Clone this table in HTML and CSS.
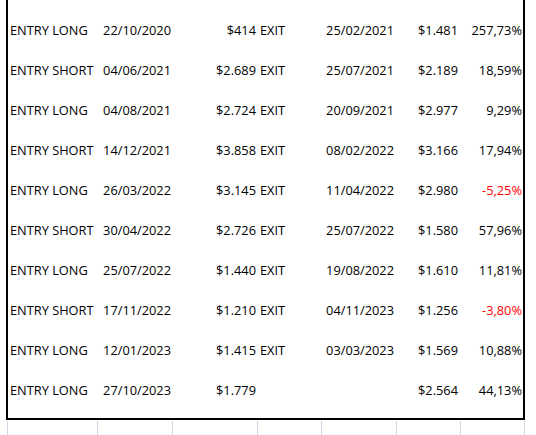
FILE: index.html
```html
<!DOCTYPE html>
<html lang="en">
<head>
<meta charset="utf-8">
<title>Trades</title>
<link rel="stylesheet" href="styles.css">
</head>
<body>
<div class="sheet">
  <div class="row"><span class="c1">ENTRY LONG</span><span class="c2">22/10/2020</span><span class="c3">$414</span><span class="c4">EXIT</span><span class="c5">25/02/2021</span><span class="c6">$1.481</span><span class="c7">257,73%</span></div>
  <div class="row"><span class="c1">ENTRY SHORT</span><span class="c2">04/06/2021</span><span class="c3">$2.689</span><span class="c4">EXIT</span><span class="c5">25/07/2021</span><span class="c6">$2.189</span><span class="c7">18,59%</span></div>
  <div class="row"><span class="c1">ENTRY LONG</span><span class="c2">04/08/2021</span><span class="c3">$2.724</span><span class="c4">EXIT</span><span class="c5">20/09/2021</span><span class="c6">$2.977</span><span class="c7">9,29%</span></div>
  <div class="row"><span class="c1">ENTRY SHORT</span><span class="c2">14/12/2021</span><span class="c3">$3.858</span><span class="c4">EXIT</span><span class="c5">08/02/2022</span><span class="c6">$3.166</span><span class="c7">17,94%</span></div>
  <div class="row"><span class="c1">ENTRY LONG</span><span class="c2">26/03/2022</span><span class="c3">$3.145</span><span class="c4">EXIT</span><span class="c5">11/04/2022</span><span class="c6">$2.980</span><span class="c7 neg">-5,25%</span></div>
  <div class="row"><span class="c1">ENTRY SHORT</span><span class="c2">30/04/2022</span><span class="c3">$2.726</span><span class="c4">EXIT</span><span class="c5">25/07/2022</span><span class="c6">$1.580</span><span class="c7">57,96%</span></div>
  <div class="row"><span class="c1">ENTRY LONG</span><span class="c2">25/07/2022</span><span class="c3">$1.440</span><span class="c4">EXIT</span><span class="c5">19/08/2022</span><span class="c6">$1.610</span><span class="c7">11,81%</span></div>
  <div class="row"><span class="c1">ENTRY SHORT</span><span class="c2">17/11/2022</span><span class="c3">$1.210</span><span class="c4">EXIT</span><span class="c5">04/11/2023</span><span class="c6">$1.256</span><span class="c7 neg">-3,80%</span></div>
  <div class="row"><span class="c1">ENTRY LONG</span><span class="c2">12/01/2023</span><span class="c3">$1.415</span><span class="c4">EXIT</span><span class="c5">03/03/2023</span><span class="c6">$1.569</span><span class="c7">10,88%</span></div>
  <div class="row"><span class="c1">ENTRY LONG</span><span class="c2">27/10/2023</span><span class="c3">$1.779</span><span class="c4"></span><span class="c5"></span><span class="c6">$2.564</span><span class="c7">44,13%</span></div>
</div>
<div class="gridlines">
  <span></span><span></span><span></span><span></span><span></span><span></span><span></span>
</div>
</body>
</html>
```
FILE: styles.css
```css
html, body {
  margin: 0;
  padding: 0;
  background: #ffffff;
}

body {
  font-family: "Open Sans", "Noto Sans", "Liberation Sans", sans-serif;
  font-size: 12.8px;
  color: #000000;
  width: 536px;
  height: 435px;
  overflow: hidden;
}

.sheet {
  margin-left: 6px;
  width: 519px;
  box-sizing: border-box;
  border-left: 2px solid #000;
  border-right: 2px solid #000;
  border-bottom: 2px solid #000;
  padding: 10px 0 8px 0;
}

.row {
  display: grid;
  grid-template-columns: 90px 75px 85px 64px 75px 64px 62px;
  height: 40px;
  line-height: 40px;
  white-space: nowrap;
}

.c1 { text-align: left; padding-left: 2px; }
.c2 { text-align: right; padding-right: 2px; }
.c3 { text-align: right; padding-right: 2px; }
.c4 { text-align: left; padding-left: 2px; }
.c5 { text-align: right; padding-right: 3px; }
.c6 { text-align: right; padding-right: 3px; }
.c7 { text-align: right; padding-right: 1px; }

.neg { color: #ff0000; }

.gridlines {
  margin-top: 1px;
  margin-left: 7px;
  height: 15px;
  display: grid;
  grid-template-columns: 90px 75px 85px 64px 75px 64px 64px;
  border-left: 1px solid #d0d7e5;
  width: 517px;
}

.gridlines span {
  box-sizing: border-box;
  border-right: 1px solid #d0d7e5;
}
```
